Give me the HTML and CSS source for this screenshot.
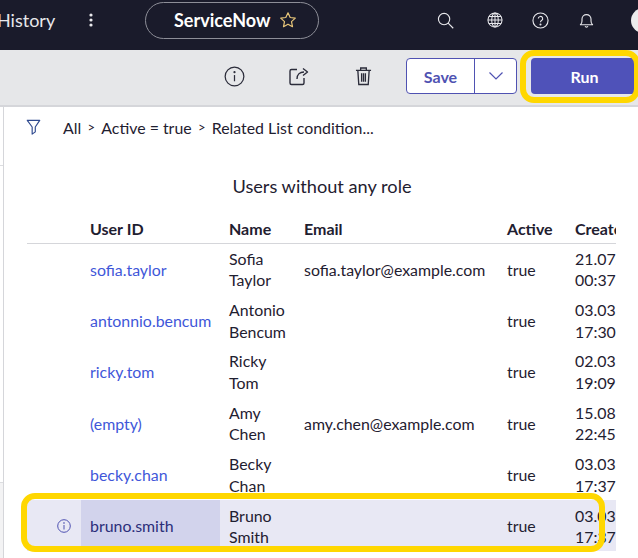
FILE: index.html
```html
<!DOCTYPE html>
<html lang="en">

<head>
    <meta charset="UTF-8">
    <meta name="viewport" content="width=device-width, initial-scale=1.0">
    <title>Users without any role</title>
    <link rel="stylesheet" href="styles.css">
</head>

<body>
    <header class="topbar">
        <span class="history">History</span>
        <svg class="dots" width="6" height="14" viewBox="0 0 6 14"><circle cx="3" cy="2" r="1.6"/><circle cx="3" cy="7" r="1.6"/><circle cx="3" cy="12" r="1.6"/></svg>
        <div class="pill">
            <span>ServiceNow</span>
            <svg width="18" height="18" viewBox="0 0 18 18" fill="none" stroke="#e8c67a" stroke-width="1.2" stroke-linejoin="round"><path d="M9 1.8l2.2 4.7 5.1.6-3.8 3.5 1 5.1L9 13.2l-4.5 2.5 1-5.1L1.700 7.100l5.100-.6z"/></svg>
        </div>
        <div class="top-icons">
            <svg class="ico-search" width="17" height="17" viewBox="0 0 18 18" fill="none" stroke="#e8e8ec" stroke-width="1.200"><circle cx="7.500" cy="7.500" r="6"/><path d="M11.800 11.800l5.400 5.400"/></svg>
            <svg class="ico-globe" width="16" height="16" viewBox="0 0 17 17" fill="none" stroke="#e8e8ec" stroke-width="1.100"><circle cx="8.500" cy="8.500" r="7.500"/><ellipse cx="8.500" cy="8.500" rx="3.500" ry="7.500"/><path d="M8.500 1v15M1 8.500h15M2 4.800h13M2 12.200h13"/></svg>
            <svg class="ico-help" width="17" height="17" viewBox="0 0 18 18" fill="none" stroke="#e8e8ec" stroke-width="1.200"><circle cx="9" cy="9" r="8"/><path d="M6.700 7a2.300 2.300 0 1 1 3.400 2c-.8.500-1.100 1-1.100 1.800"/><circle cx="9" cy="13.300" r=".5"/></svg>
            <svg class="ico-bell" width="15" height="17" viewBox="0 0 16 18" fill="none" stroke="#e8e8ec" stroke-width="1.200" stroke-linejoin="round"><path d="M1.500 13.500c1.200-1 1.700-2 1.700-4V7.500a4.800 4.800 0 0 1 9.600 0v2c0 2 .5 3 1.700 4z"/><path d="M6.500 15a1.600 1.600 0 0 0 3 0"/></svg>
            <div class="avatar"></div>
        </div>
    </header>

    <div class="toolbar">
        <svg class="tool" width="21" height="21" viewBox="0 0 22 22" fill="none" stroke="#2b2c3a" stroke-width="1.300"><circle cx="11" cy="11" r="9.800"/><path d="M11 9.500v6.500"/><circle cx="11" cy="6.500" r=".5"/></svg>
        <svg class="tool" width="20" height="20" viewBox="0 0 20 20" fill="none" stroke="#2b2c3a" stroke-width="1.400" stroke-linejoin="round"><path d="M8 3.500H2.500a1.500 1.500 0 0 0-1.500 1.500v12a1.500 1.500 0 0 0 1.500 1.500h11a1.500 1.500 0 0 0 1.500-1.500v-5"/><path d="M8 13c0-4.500 3-7 7-7M14 2.500L18.500 6 14 9.500"/></svg>
        <svg class="tool" width="17" height="20" viewBox="0 0 18 20" fill="none" stroke="#2b2c3a" stroke-width="1.400"><path d="M1 4h16M6 4V1.500h6V4M3 4l1 15h10l1-15"/><path d="M7 7v9M9 7v9M11 7v9"/></svg>
        <div class="save-group">
            <button class="save">Save</button>
            <button class="save-arrow">
                <svg width="16" height="10" viewBox="0 0 16 10" fill="none" stroke="#4f52b2" stroke-width="1.200"><path d="M1.500 1.500L8 8l6.500-6.500"/></svg>
            </button>
        </div>
        <button class="run">Run</button>
    </div>

    <div class="page">
        <aside class="side">
            <div class="side-top"></div>
            <div class="side-mid"></div>
            <div class="side-end"></div>
        </aside>

        <main class="content">
            <div class="crumbs">
                <svg width="15" height="16" viewBox="0 0 16 18" fill="none" stroke="#2f4a8f" stroke-width="1.300" stroke-linejoin="round"><path d="M1 1.500h14L10 9v5.500l-3.500 2.500V9z"/></svg>
                <span class="crumb-text">All</span>
                <span class="sep">&gt;</span>
                <span class="crumb-text">Active = true</span>
                <span class="sep">&gt;</span>
                <span class="crumb-text">Related List condition...</span>
            </div>

            <h2>Users without any role</h2>

            <div class="table-wrap">
                <table>
                    <thead>
                        <tr>
                            <th class="col-info"></th>
                            <th class="col-user">User ID</th>
                            <th class="col-name">Name</th>
                            <th class="col-email">Email</th>
                            <th class="col-active">Active</th>
                            <th class="col-created">Created</th>
                        </tr>
                    </thead>
                    <tbody>
                        <tr>
                            <td></td>
                            <td><a href="#">sofia.taylor</a></td>
                            <td>Sofia<br>Taylor</td>
                            <td>sofia.taylor@example.com</td>
                            <td>true</td>
                            <td>21.07.2023<br>00:37:12</td>
                        </tr>
                        <tr>
                            <td></td>
                            <td><a href="#">antonnio.bencum</a></td>
                            <td>Antonio<br>Bencum</td>
                            <td></td>
                            <td>true</td>
                            <td>03.03.2023<br>17:30:41</td>
                        </tr>
                        <tr>
                            <td></td>
                            <td><a href="#">ricky.tom</a></td>
                            <td>Ricky<br>Tom</td>
                            <td></td>
                            <td>true</td>
                            <td>02.03.2023<br>19:09:25</td>
                        </tr>
                        <tr>
                            <td></td>
                            <td><a href="#">(empty)</a></td>
                            <td>Amy<br>Chen</td>
                            <td>amy.chen@example.com</td>
                            <td>true</td>
                            <td>15.08.2023<br>22:45:03</td>
                        </tr>
                        <tr>
                            <td></td>
                            <td><a href="#">becky.chan</a></td>
                            <td>Becky<br>Chan</td>
                            <td></td>
                            <td>true</td>
                            <td>03.03.2023<br>17:37:18</td>
                        </tr>
                        <tr class="row-hover">
                            <td class="info-cell">
                                <svg width="14" height="14" viewBox="0 0 14 14" fill="none" stroke="#4f52b2" stroke-width="1"><circle cx="7" cy="7" r="6.300"/><path d="M7 6v4.500"/><circle cx="7" cy="4" r=".4"/></svg>
                            </td>
                            <td class="cell-active"><a href="#">bruno.smith</a></td>
                            <td>Bruno<br>Smith</td>
                            <td></td>
                            <td>true</td>
                            <td>03.03.2023<br>17:37:18</td>
                        </tr>
                    </tbody>
                </table>
            </div>
        </main>
    </div>

    <div class="mark mark-run"></div>
    <div class="mark mark-row"></div>
</body>

</html>
```

FILE: styles.css
```css
* {
    box-sizing: border-box;
}

body {
    font-family: Lato, "Open Sans", sans-serif;
    margin: 0;
    padding: 0;
    height: 558px;
    overflow: hidden;
    position: relative;
    background-color: #fff;
    color: #1f2030;
    font-size: 15.900px;
}

.topbar {
    height: 50px;
    padding-bottom: 10px;
    background-color: #1a1b2b;
    color: #fff;
    display: flex;
    align-items: center;
    margin-left: -3px;
}

.topbar > * {
    flex: none;
}

.history {
    font-size: 18px;
    width: 91px;
    color: #e8e8ec;
}

.dots {
    fill: #e8e8ec;
}

.pill {
    margin-left: 51px;
    width: 174px;
    height: 37px;
    border: 1px solid #8d8e98;
    border-radius: 19px;
    display: flex;
    align-items: center;
    padding-left: 28px;
    gap: 9px;
    font-size: 18px;
    font-weight: 700;
}

.top-icons {
    display: flex;
    align-items: center;
    margin-left: 118px;
}

.top-icons svg {
    flex: none;
}

.ico-globe {
    margin-left: 33px;
}

.ico-help {
    margin-left: 29px;
}

.ico-bell {
    margin-left: 30px;
}

.avatar {
    width: 25px;
    height: 25px;
    margin-left: 37px;
    border-radius: 50%;
    background-color: #ececec;
    flex: none;
}

.toolbar {
    height: 57px;
    padding-bottom: 3px;
    background-color: #e6e7e9;
    border-bottom: 2px solid #d5d6da;
    display: flex;
    align-items: center;
}

.tool {
    flex: none;
}

.toolbar .tool:nth-child(1) {
    margin-left: 224px;
}

.toolbar .tool:nth-child(2) {
    margin-left: 44px;
}

.toolbar .tool:nth-child(3) {
    margin-left: 46px;
}

.save-group {
    margin-left: 34px;
    display: flex;
    width: 111px;
    height: 36px;
    border: 1px solid #4f52b2;
    border-radius: 4px;
    background-color: #fff;
}

.save-group button {
    border: 0;
    background: none;
    padding: 0;
    font-family: inherit;
}

.save {
    width: 68px;
    border-right: 1px solid #4f52b2 !important;
    color: #4f52b2;
    font-size: 16px;
    font-weight: 700;
}

.save-arrow {
    flex: 1;
}

.run {
    margin-left: 14px;
    width: 105px;
    height: 36px;
    border: 0;
    border-radius: 4px;
    padding: 0 0 0 2px;
    background-color: #4f52b9;
    color: #fff;
    font-family: inherit;
    font-size: 16px;
    font-weight: 700;
}

.page {
    display: flex;
    height: 451px;
}

.side {
    width: 4px;
    flex: none;
    display: flex;
    flex-direction: column;
    border-right: 1px solid #d5d6da;
}

.side-top {
    height: 59px;
    border-bottom: 1px solid #dcdde0;
}

.side-mid {
    height: 317px;
    border-bottom: 1px solid #dcdde0;
}

.side-end {
    flex: 1;
    background-color: #f3f3f4;
}

.content {
    flex: 1;
}

.crumbs {
    display: flex;
    align-items: center;
    height: 42px;
    padding: 0 0 2px 22px;
}

.crumb-text {
    white-space: nowrap;
}

.crumbs svg {
    margin-right: 22px;
}

.sep {
    font-size: 13px;
    margin: 0 6.250px;
}

h2 {
    margin: 0;
    padding: 26px 0 0 2px;
    height: 65px;
    text-align: center;
    font-size: 18.200px;
    font-weight: 400;
}

.table-wrap {
    margin-left: 23px;
    width: 589px;
    overflow: hidden;
}

table {
    border-collapse: collapse;
    table-layout: fixed;
    width: 680px;
}

th {
    height: 29px;
    text-align: left;
    font-weight: 700;
    font-size: 16px;
    padding: 0 0 0 9px;
    border-bottom: 1px solid #d5d6da;
    white-space: nowrap;
    overflow: hidden;
}

td {
    height: 51.400px;
    padding: 1px 0 0 9px;
    line-height: 21.500px;
    white-space: nowrap;
    overflow: hidden;
}

.col-info {
    width: 54px;
}

.col-user {
    width: 139px;
}

.col-name {
    width: 75px;
}

.col-email {
    width: 203px;
}

.col-active {
    width: 68px;
}

.col-created {
    width: 141px;
}

td a {
    color: #3f57d9;
    text-decoration: none;
}

.row-hover {
    background-color: #e8e8f4;
}

.row-hover a {
    color: #2b2e7a;
}

.cell-active {
    background-color: #d2d3ec;
}

.info-cell {
    padding: 0 0 0 30px;
}

.info-cell svg {
    display: block;
}

.mark {
    position: absolute;
    border: 6px solid #ffd700;
    border-radius: 14px;
}

.mark-run {
    left: 520px;
    top: 50px;
    width: 120px;
    height: 53px;
}

.mark-row {
    left: 21px;
    top: 493px;
    width: 584px;
    height: 59px;
}
```
